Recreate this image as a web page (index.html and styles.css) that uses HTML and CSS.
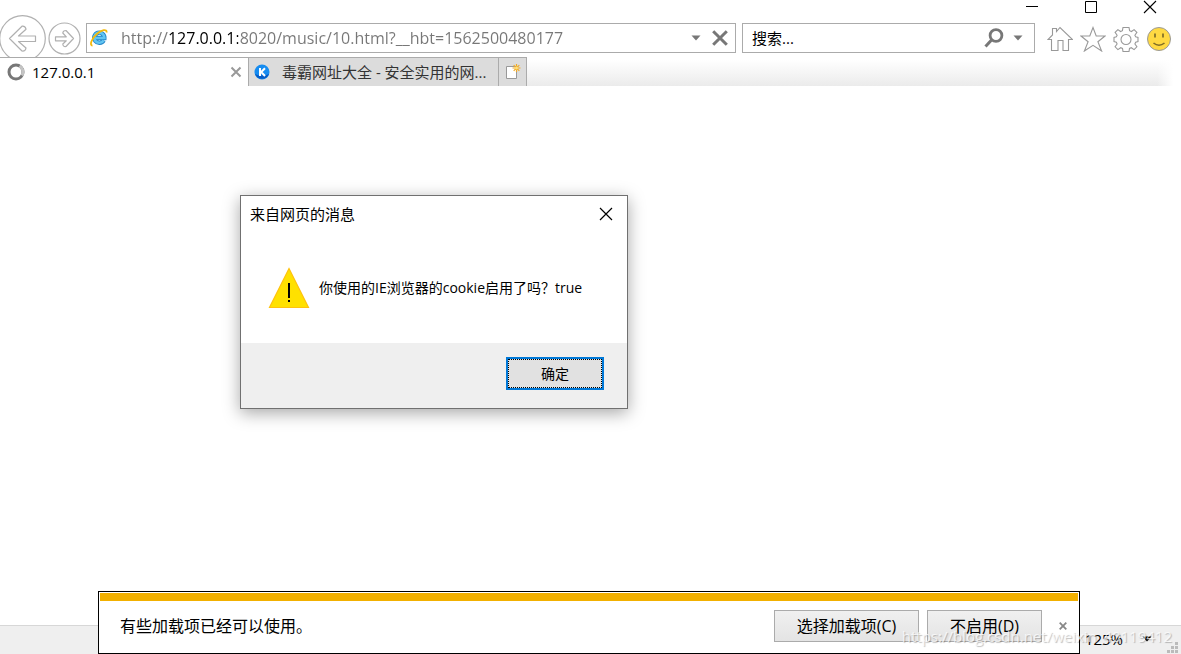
FILE: index.html
```html
<!DOCTYPE html>
<html lang="zh-CN">
<head>
<meta charset="utf-8">
<title>127.0.0.1</title>
<meta name="viewport" content="width=device-width, initial-scale=1">
<link rel="stylesheet" href="styles.css">
</head>
<body>
<div class="browser">
  <header class="chrome">
    <div class="window-controls">
      <button class="icon-button" type="button" aria-label="最小化"><svg width="14" height="14" viewBox="0 0 14 14"><path d="M1 6.500h12" stroke="#000"/></svg></button>
      <button class="icon-button" type="button" aria-label="最大化"><svg width="14" height="14" viewBox="0 0 14 14"><path d="M1.500 1.500h11v11h-11z" fill="none" stroke="#000"/></svg></button>
      <button class="icon-button" type="button" aria-label="关闭"><svg width="14" height="14" viewBox="0 0 14 14"><path d="M1 1l12 12M13 1L1 13" stroke="#000" stroke-width="1.100"/></svg></button>
    </div>
    <div class="toolbar">
      <button class="icon-button back" type="button" aria-label="后退"><svg width="47" height="47" viewBox="0 0 47 47"><g fill="none" stroke="#b0b0b0" stroke-width="1.200"><circle cx="22.500" cy="23.500" r="22.800" fill="#fff"/><path d="M9.500 23.500 22 11.200q3.500-.5 4 3L18.500 21H35.500v5.500H18.500l7.500 6.500q-.5 3.500-4 3z" stroke-linejoin="round"/></g></svg></button>
      <button class="icon-button forward" type="button" aria-label="前进"><svg width="33" height="33" viewBox="0 0 33 33"><g fill="none" stroke="#b0b0b0" stroke-width="1.200"><circle cx="16.500" cy="16.500" r="15.500"/><path d="M25.500 16.500 18 8.500q-3 0-3.200 2.500l3.500 3.800H7.500v4h10.800L14.800 22q.2 3 3.200 2.500z" stroke-linejoin="round"/></g></svg></button>
      <div class="address">
        <svg width="18" height="18" viewBox="0 0 18 18" aria-hidden="true"><path d="M13.700 11.300A5.100 5.100 0 1 1 14.400 9H5" fill="none" stroke="#2687c9" stroke-width="4.300"/><path d="M13.700 11.300A5.100 5.100 0 1 1 14.400 9H5" fill="none" stroke="#62c5f2" stroke-width="2.600"/><path d="M2.500 16.500C-.8 16.500 1.500 9.500 6.800 5 11.500.8 17.300-.5 16.500 3.500" fill="none" stroke="#f3b90d" stroke-width="1.800"/></svg>
        <input class="url" type="text" aria-label="地址" value="http://127.0.0.1:8020/music/10.html?__hbt=1562500480177">
        <button class="icon-button" type="button" aria-label="显示地址列表"><svg width="10" height="6" viewBox="0 0 10 6"><path d="M.5.500h9L5 5.500z" fill="#777"/></svg></button>
        <button class="icon-button" type="button" aria-label="停止"><svg width="16" height="16" viewBox="0 0 16 16"><path d="M1.200 1.200l13.600 13.600M14.800 1.200L1.200 14.800" stroke="#777" stroke-width="3"/></svg></button>
      </div>
      <div class="search">
        <input class="query" type="text" aria-label="搜索" value="搜索...">
        <button class="icon-button" type="button" aria-label="搜索"><svg width="20" height="20" viewBox="0 0 20 20"><circle cx="12" cy="7.500" r="5.900" fill="none" stroke="#777" stroke-width="2.800"/><path d="M8 11.500 1.500 18.500" stroke="#777" stroke-width="3"/></svg></button>
        <button class="icon-button" type="button" aria-label="搜索选项"><svg width="10" height="6" viewBox="0 0 10 6"><path d="M.5.500h9L5 5.500z" fill="#777"/></svg></button>
      </div>
      <nav class="tools" aria-label="工具">
        <button class="icon-button" type="button" aria-label="主页"><svg width="26" height="26" viewBox="0 0 26 26"><path d="M4.500 13.500H1L5.500 9V2.500h4V5.500L13 1.500l12.500 12h-4v11h-5.500v-10h-5v10H4.500z" fill="none" stroke="#999" stroke-width="1.100"/></svg></button>
        <button class="icon-button" type="button" aria-label="收藏夹"><svg width="26" height="26" viewBox="0 0 26 26"><path d="M13 1.500l3.200 8.500h8.800l-7.100 5.700 3.700 9.300-8.600-5.700L4.400 25l3.700-9.300L1 10h8.800z" fill="none" stroke="#999" stroke-width="1.100"/></svg></button>
        <button class="icon-button" type="button" aria-label="设置"><svg width="26" height="26" viewBox="0 0 26 26"><g fill="none" stroke="#999" stroke-width="1.100"><path d="M10 1.500h6l.6 3.200 1.800.8 2.700-1.900 2 2 .8.8-2 2.800.8 1.700 2.300.6v4l-2.300.6-.8 1.900 2 2.800-2.800 2.800-2.800-1.900-1.800.8-.5 3h-6l-.5-3-1.800-.8-2.800 1.900-2.800-2.800 2-2.800-.8-1.900-2.300-.6v-4l2.300-.6.8-1.700-2-2.800 2.800-2.800 2.700 1.900 1.800-.8z"/><circle cx="13" cy="13.500" r="5"/></g></svg></button>
        <button class="icon-button" type="button" aria-label="发送笑脸"><svg width="26" height="26" viewBox="0 0 26 26"><circle cx="13" cy="13" r="11.500" fill="#ffd942" stroke="#999"/><path d="M9 7.500v4M17 7.500v4" stroke="#7f6d27" stroke-width="1.700"/><path d="M7.500 17q5.500 4.500 11 0" fill="none" stroke="#7f6d27" stroke-width="1.600"/></svg></button>
      </nav>
    </div>
    <div class="tabs" role="tablist">
      <div class="tab active">
        <svg width="18" height="18" viewBox="0 0 18 18" aria-hidden="true"><circle cx="9" cy="9" r="7" fill="none" stroke="#777" stroke-width="3"/><path d="M12.500 3A7 7 0 0 1 15 12.500" fill="none" stroke="#c4c4c4" stroke-width="3"/></svg>
        <button class="tab-title" type="button" role="tab" aria-selected="true">127.0.0.1</button>
        <button class="icon-button" type="button" aria-label="关闭选项卡"><svg width="12" height="12" viewBox="0 0 12 12"><path d="M1.500 1.500l9 9M10.500 1.500l-9 9" stroke="#999" stroke-width="2"/></svg></button>
      </div>
      <div class="tab other">
        <svg width="16" height="16" viewBox="0 0 16 16" aria-hidden="true"><circle cx="8" cy="8" r="7.500" fill="#168cf0"/><path d="M1 10a7.500 7.500 0 0 0 14 0q-7 3-14 0z" fill="#075cc5"/><path d="M6 4v8M11 4.200 7.200 8l3.800 4" fill="none" stroke="#fff" stroke-width="2"/></svg>
        <button class="tab-title" type="button" role="tab" aria-selected="false">毒霸网址大全 - 安全实用的网...</button>
      </div>
      <button class="new-tab" type="button" aria-label="新建选项卡"><svg width="16" height="18" viewBox="0 0 16 18"><path d="M1.500 3.500h10v12h-10z" fill="#fff" stroke="#999"/><path d="M11.500 1v8M7.500 5h8M8.700 2.200l5.600 5.600M14.300 2.200 8.700 7.800" stroke="#f1aa25" stroke-width="1.200"/><circle cx="11.500" cy="5" r="1.500" fill="#ffe27b"/></svg></button>
      <div class="tab-space"></div>
    </div>
  </header>
  <main class="page"></main>
  <footer class="status">
    <button class="zoom-level" type="button">125%<svg width="10" height="6" viewBox="0 0 10 6" aria-hidden="true"><path d="M.5.500h9L5 5.500z" fill="#000"/></svg></button>
    <svg class="grip" width="12" height="12" viewBox="0 0 12 12" aria-hidden="true"><path d="M8 0h3v3H8zM4 4h3v3H4zM8 4h3v3H8zM0 8h3v3H0zM4 8h3v3H4zM8 8h3v3H8z" fill="#bbb"/></svg>
  </footer>

  <section class="dialog" role="alertdialog" aria-labelledby="dialog-title" aria-describedby="dialog-text">
    <div class="dialog-head">
      <h1 class="dialog-title" id="dialog-title">来自网页的消息</h1>
      <button class="icon-button" type="button" aria-label="关闭对话框"><svg width="14" height="14" viewBox="0 0 14 14"><path d="M1 1l12 12M13 1L1 13" stroke="#000" stroke-width="1.200"/></svg></button>
    </div>
    <div class="dialog-body">
      <svg width="42" height="42" viewBox="0 0 42 42" aria-hidden="true"><path d="M21 1.500 40.500 40.500h-39z" fill="#ffe100" stroke="#ffc20e" stroke-width="1.200"/><path d="M21 16v15M21 33v2" stroke="#000" stroke-width="2"/></svg>
      <p class="dialog-text" id="dialog-text">你使用的IE浏览器的cookie启用了吗？true</p>
    </div>
    <div class="dialog-foot"><button class="confirm" type="button">确定</button></div>
  </section>

  <aside class="notice" aria-label="通知">
    <div class="notice-content">
      <p class="notice-text">有些加载项已经可以使用。</p>
      <button class="notice-button choose" type="button">选择加载项(C)</button>
      <button class="notice-button" type="button">不启用(D)</button>
      <button class="icon-button notice-close" type="button" aria-label="关闭通知"><svg width="8" height="8" viewBox="0 0 8 8"><path d="M.7.700l6.600 6.600M7.300.700.7 7.300" stroke="#888" stroke-width="1.800"/></svg></button>
    </div>
  </aside>
  <div class="watermark">https://blog.csdn.net/weixin_40119412</div>
</div>
</body>
</html>
```
FILE: styles.css
```css
* { box-sizing: border-box; }

body {
  margin: 0;
  background: #fff;
  color: #000;
  font: 15px/20px "Open Sans", "Noto Sans CJK SC", sans-serif;
}

button, input { font: inherit; color: inherit; }

svg { display: block; flex: none; }

.browser {
  position: relative;
  display: flex;
  flex-direction: column;
  min-height: 100vh;
  overflow: hidden;
}

.icon-button {
  flex: none;
  padding: 0;
  border: 0;
  background: none;
}

.window-controls {
  display: flex;
  justify-content: flex-end;
  align-items: flex-start;
  gap: 45px;
  height: 15px;
  padding-right: 24px;
}

.toolbar {
  display: flex;
  align-items: center;
  height: 42px;
  padding-right: 9px;
  overflow: hidden;
}

.back { align-self: flex-start; }

.forward { margin: 4px 5px 0 1px; }

.address, .search {
  display: flex;
  align-items: center;
  height: 30px;
  margin-top: 4px;
  border: 1px solid #ababab;
  background: #fff;
}

.address {
  flex: 1;
  min-width: 0;
  gap: 11px;
  padding: 0 7px 0 3px;
}

.url, .query {
  flex: 1;
  min-width: 0;
  padding: 0;
  border: 0;
  outline: 0;
  background: none;
}

.url {
  margin-left: 2px;
  font-size: 16px;
  color: transparent;
  background: linear-gradient(to right, #777 48px, #000 48px, #000 117px, #777 117px);
  background-clip: text;
  -webkit-background-clip: text;
}

.search {
  flex: 0 1 293px;
  min-width: 0;
  gap: 9px;
  margin-left: 6px;
  padding: 0 11px 0 9px;
}

.tools {
  display: flex;
  gap: 7px;
  margin: 5px 0 0 12px;
}

.tabs {
  display: flex;
  height: 29px;
  margin-right: 8px;
}

.tab-space {
  flex: 1;
  background: linear-gradient(to left, #fff, transparent 16px), linear-gradient(#fff 10%, #ebebeb);
}

.tab {
  display: flex;
  align-items: center;
  border-top: 1px solid #ababab;
}

.tab-title {
  flex: 1;
  min-width: 0;
  padding: 0;
  border: 0;
  background: none;
  text-align: left;
  white-space: nowrap;
}

.active {
  width: 248px;
  gap: 7px;
  padding: 0 6px 0 7px;
  background: #fff;
}

.other {
  width: 250px;
  gap: 12px;
  padding-left: 5px;
  border-left: 1px solid #ababab;
  background: #dcdcdc;
  color: #333;
}

.new-tab {
  width: 29px;
  padding: 0 0 0 6px;
  border: solid #ababab;
  border-width: 1px 1px 0;
  background: #dcdcdc;
}

.page { flex: 1; }

.status {
  display: flex;
  justify-content: flex-end;
  align-items: center;
  height: 29px;
  padding-right: 2px;
  border-top: 1px solid #d7d7d7;
  background: #efefef;
}

.zoom-level {
  display: flex;
  align-items: center;
  gap: 19px;
  padding: 0 0 2px;
  border: 0;
  background: none;
}

.grip { align-self: flex-end; margin-left: 15px; }

.dialog {
  position: absolute;
  top: 195px;
  left: 240px;
  width: 388px;
  border: 1px solid #707070;
  background: #fff;
  box-shadow: 0 4px 16px rgba(0, 0, 0, .35);
}

.dialog-head {
  display: flex;
  align-items: center;
  justify-content: space-between;
  height: 36px;
  padding: 0 14px 0 9px;
}

.dialog-title {
  margin: 0;
  font-size: 15px;
  font-weight: 400;
}

.dialog-body {
  display: flex;
  align-items: center;
  gap: 9px;
  height: 111px;
  padding: 1px 27px 0;
}

.dialog-text { margin: 0; font-size: 14px; white-space: nowrap; }

.dialog-foot {
  display: flex;
  justify-content: flex-end;
  padding: 14px 23px 18px;
  background: #efefef;
}

.confirm {
  width: 98px;
  height: 33px;
  padding: 0;
  border: 2px solid #0078d7;
  background: #e1e1e1;
  font-size: 14px;
  outline: 1px dotted #000;
  outline-offset: -3px;
}

.notice {
  position: absolute;
  right: 101px;
  bottom: 0;
  left: 98px;
  padding: 1px;
  border: 1px solid #000;
  background: #fff;
}

.notice-content {
  display: flex;
  align-items: center;
  gap: 8px;
  height: 59px;
  padding: 0 11px 1px 20px;
  border-top: 8px solid #f2b000;
  font-size: 16px;
}

.notice-text { flex: 1; margin: 0; }

.notice-button {
  width: 115px;
  height: 32px;
  padding: 0;
  border: 1px solid #ababab;
  background: linear-gradient(#f0f0f0, #e4e4e4);
}

.choose { width: 145px; }

.notice-close { margin-left: 9px; }

.watermark {
  position: absolute;
  right: 9px;
  bottom: 8px;
  color: rgba(255, 255, 255, .75);
  font-size: 15px;
  text-shadow: 1px 1px 1px rgba(0, 0, 0, .25);
  pointer-events: none;
}
```
